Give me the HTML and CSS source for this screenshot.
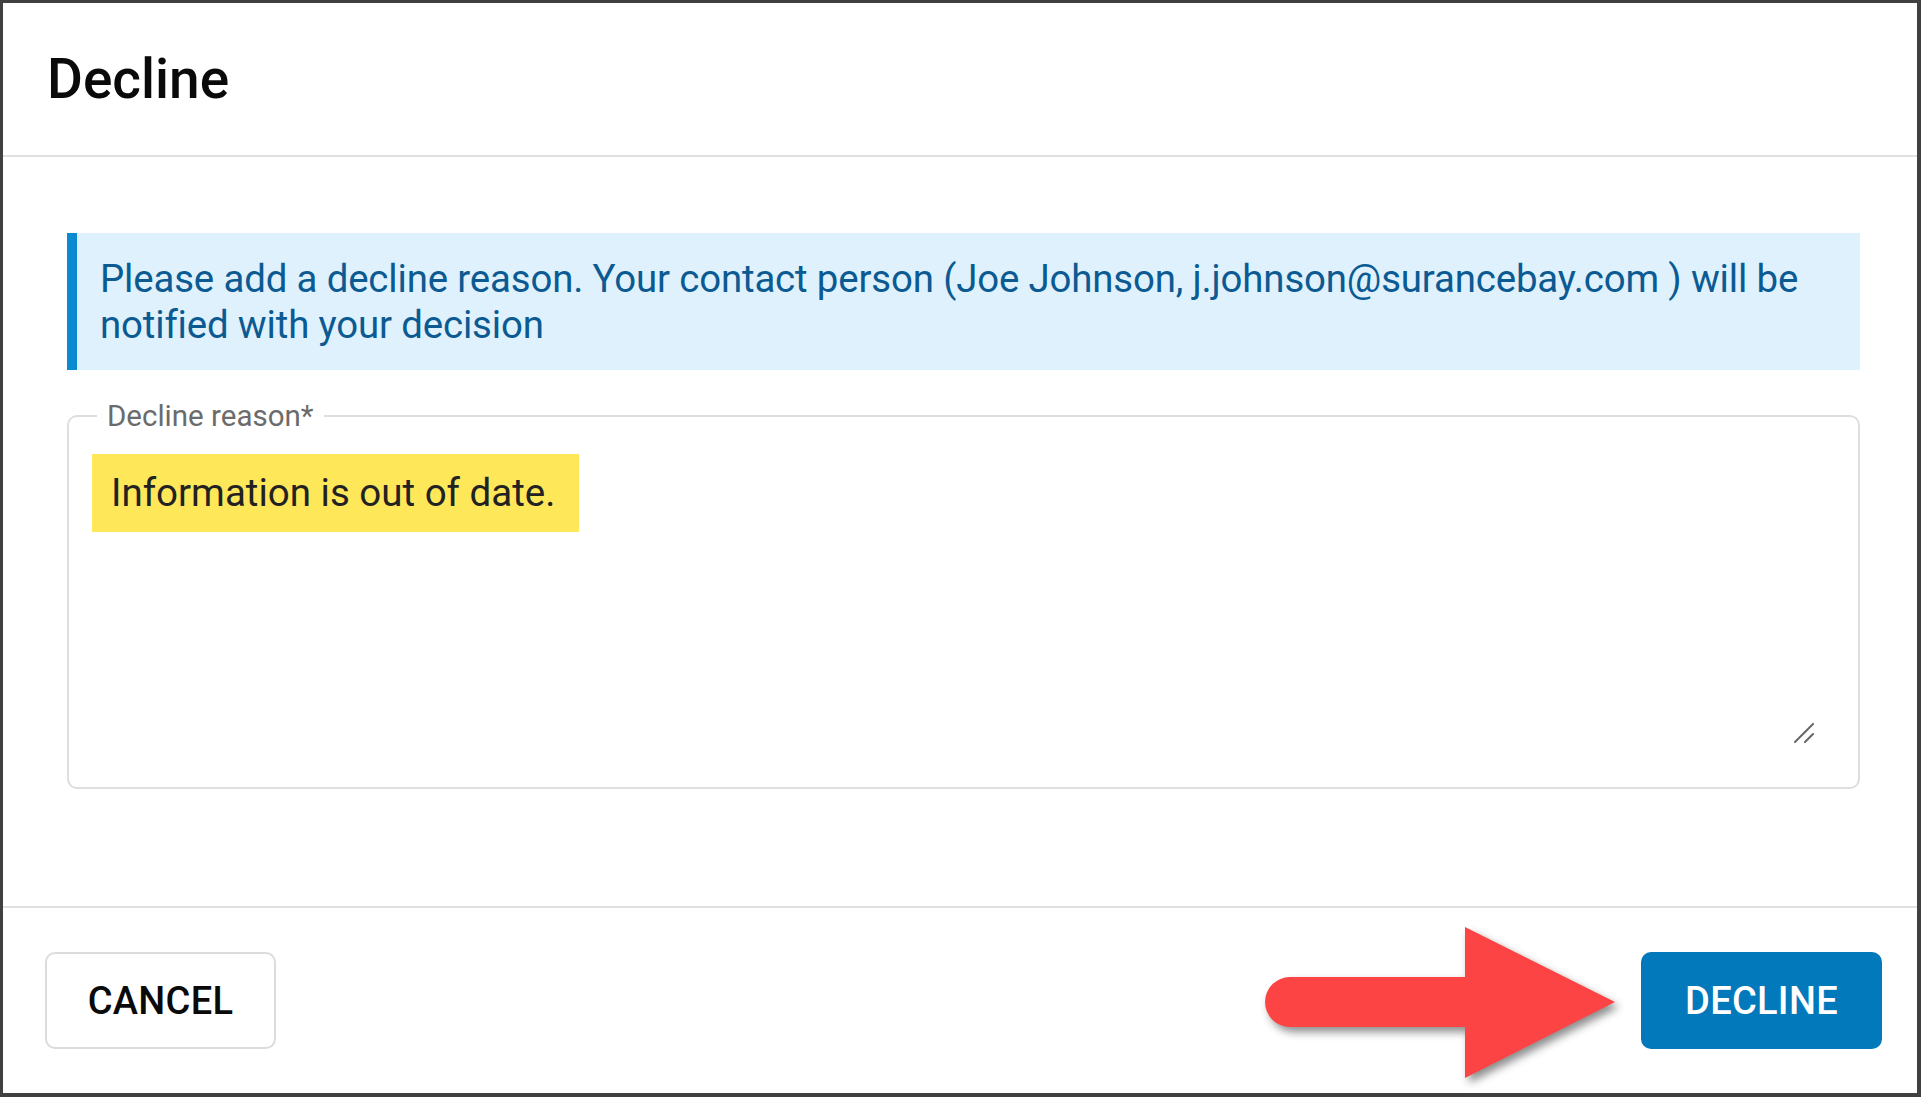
FILE: index.html
```html
<!DOCTYPE html>
<html lang="en">
<head>
    <meta charset="UTF-8">
    <title>Decline</title>
    <link rel="stylesheet" href="styles.css">
</head>
<body>
<div id="dialog">

    <div id="dialog_head">
        <h2 class="dialog_title">Decline</h2>
    </div>

    <div id="dialog_body">

        <div class="notice">
            Please add a decline reason. Your contact person (Joe Johnson, j.johnson@surancebay.com ) will be notified with your decision
        </div>

        <fieldset class="reason">
            <legend class="reason_label">Decline reason*</legend>
            <div class="reason_text">
                <span class="mark">Information is out of date.</span>
                <svg class="resize" width="20" height="20" viewBox="0 0 20 20">
                    <line x1="1" y1="19" x2="19" y2="1" stroke="#666" stroke-width="2" stroke-linecap="round"/>
                    <line x1="11" y1="19" x2="19" y2="11" stroke="#666" stroke-width="2" stroke-linecap="round"/>
                </svg>
            </div>
        </fieldset>
    </div>

    <div id="dialog_foot">
        <button class="btn btn_cancel">CANCEL</button>
        <svg class="arrow" width="360" height="165" viewBox="0 0 360 165">
            <path d="M25,50 L200,50 L200,0 L350,75 L200,151 L200,100 L25,100 A25,25 0 0 1 25,50 Z" fill="#fd4444"/>
        </svg>
        <button class="btn btn_decline">DECLINE</button>
    </div>
</div>
</body>
</html>
```

FILE: styles.css
```css
body, div, h2, p, fieldset, legend, button {
    margin: 0;
    padding: 0
}
html, body{
    background: #fff;
}
#dialog{
    width: 1921px;
    height: 1097px;
    box-sizing: border-box;
    border-style: solid;
    border-color: #404040;
    border-width: 3px 4px 4px 3px;
    display: flex;
    flex-direction: column;
    font-family: Roboto, "Liberation Sans", sans-serif;
    color: #111;
}
#dialog_head{
    height: 152px;
    padding: 0 44px;
    display: flex;
    align-items: center;
    border-bottom: 2px solid #e0e0e0;
}
.dialog_title{
    font-size: 55px;
    font-weight: 500;
    color: #0a0a0a;
}
#dialog_body{
    flex: 1;
    padding: 76px 57px 0 64px;
}
.notice{
    height: 137px;
    box-sizing: border-box;
    background: #dff1fd;
    border-left: 10px solid #0a8bd1;
    padding: 23px 28px 0 23px;
    font-size: 38.4px;
    letter-spacing: -0.15px;
    line-height: 46px;
    color: #0b5a92;
}
.reason{
    margin-top: 30px;
    border: 2px solid #dedede;
    border-radius: 10px;
    padding: 22px 23px 0 23px;
}
.reason_label{
    margin-left: 5px;
    padding: 0 10px;
    font-size: 29.5px;
    line-height: 32px;
    color: #6b6b6b;
}
.reason_text{
    position: relative;
    height: 333px;
}
.mark{
    display: inline-block;
    height: 78px;
    line-height: 78px;
    padding: 0 24px 0 19px;
    background: #ffe75a;
    font-size: 38.5px;
    color: #222;
}
.resize{
    position: absolute;
    right: 21px;
    bottom: 44px;
}
#dialog_foot{
    position: relative;
    height: 185px;
    border-top: 2px solid #e0e0e0;
    padding: 0 35px 0 42px;
    display: flex;
    align-items: center;
    justify-content: space-between;
}
.btn{
    height: 97px;
    border-radius: 10px;
    font-family: Roboto, "Liberation Sans", sans-serif;
    font-size: 38px;
    font-weight: 500;
    letter-spacing: 0.3px;
    cursor: pointer;
}
.btn_cancel{
    width: 231px;
    background: #fff;
    border: 2px solid #dcdcdc;
    color: #0a0a0a;
}
.btn_decline{
    width: 241px;
    background: #0179ba;
    border: none;
    color: #fff;
}
.arrow{
    position: absolute;
    left: 1262px;
    top: 19px;
    filter: drop-shadow(4px 5px 4px rgba(0,0,0,0.45));
}
```
